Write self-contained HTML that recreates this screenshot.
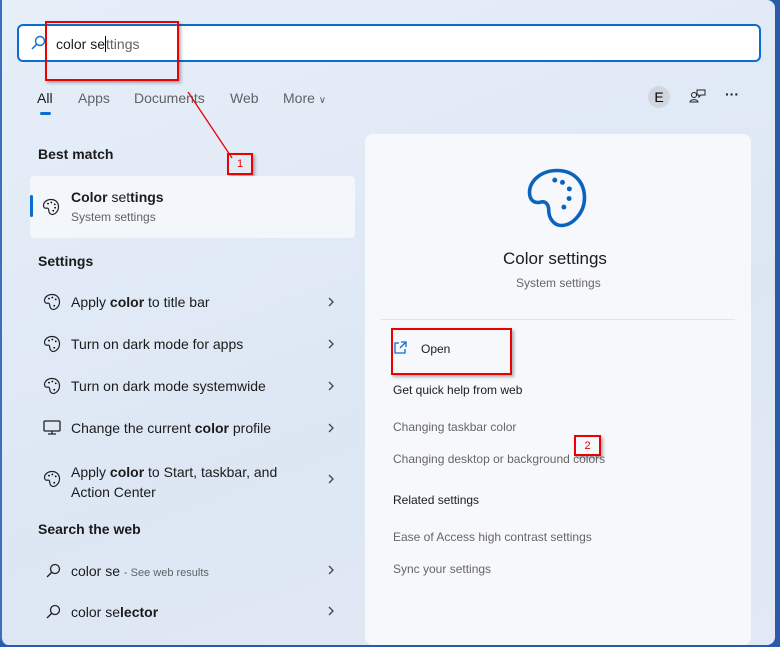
<!DOCTYPE html>
<html><head><style>
*{margin:0;padding:0;box-sizing:border-box}
body{width:780px;height:647px;overflow:hidden;background:#2a5aa8;font-family:"Liberation Sans",sans-serif;position:relative}
.win{position:absolute;left:0;top:0;width:775px;height:645px;background:linear-gradient(160deg,#e6eef8,#dde7f4 60%,#e2e8f5);border-radius:0 8px 8px 8px;border-left:2px solid #3a6fc0}
.abs{position:absolute}
.search{left:17px;top:24px;width:744px;height:38px;border:2px solid #0a6ed1;border-radius:6px;background:#fff}
.t{position:absolute;font-size:14px;color:#1b1b1b;white-space:nowrap}
.t.g,.g{color:#5f6368}
.h{font-weight:bold;font-size:14px}
.chev{position:absolute;left:327px}
.panel{left:365px;top:134px;width:386px;height:511px;background:#f7f8fc;border-radius:8px}
.red{position:absolute;border:2px solid #e00;box-shadow:2px 2px 3px rgba(0,0,0,.3)}
.pt{position:absolute;font-size:12px;color:#1b1b1b;white-space:nowrap}
.pt.g{color:#666}
</style></head><body>
<div class="win"></div>
<div class="abs search"></div>
<svg class="abs" style="left:30px;top:35px" width="16" height="16" viewBox="0 0 16 16"><circle cx="10" cy="6" r="4.5" fill="none" stroke="#0a6ed1" stroke-width="1.4"/><path d="M6.8 9.2L2 14" stroke="#0a6ed1" stroke-width="1.5"/></svg>
<div class="t" style="left:56px;top:36px">color se<span style="border-left:1px solid #000"></span><span class="g">ttings</span></div>
<div class="red" style="left:45px;top:21px;width:134px;height:60px"></div>
<div class="t" style="left:37px;top:90px">All</div>
<div class="abs" style="left:40px;top:112px;width:11px;height:3px;background:#0a6ed1;border-radius:2px"></div>
<div class="t g" style="left:78px;top:90px">Apps</div>
<div class="t g" style="left:134px;top:90px">Documents</div>
<div class="t g" style="left:230px;top:90px">Web</div>
<div class="t g" style="left:283px;top:90px">More <span style="font-size:10px">∨</span></div>
<div class="abs" style="left:648px;top:86px;width:22px;height:22px;border-radius:50%;background:#d2d6de;font-size:14px;text-align:center;line-height:22px">E</div>
<svg class="abs" style="left:689px;top:88px" width="18" height="16" viewBox="0 0 18 16"><circle cx="5" cy="7" r="2.5" fill="none" stroke="#222"/><path d="M1 14c0-3 8-3 8 0zM8 2h8v5h-4l-2 2v-2H8z" fill="none" stroke="#222"/></svg>
<div class="t" style="left:725px;top:86px;font-weight:bold">···</div>
<svg class="abs" style="left:0;top:0" width="780" height="647"><path d="M188 92L232 158M499 390L580 440" stroke="#e00" stroke-width="1.3"/></svg>
<div class="red" style="left:227px;top:153px;width:26px;height:22px;font-size:11px;color:#e00;text-align:center;line-height:18px">1</div>
<div class="t h" style="left:38px;top:146px">Best match</div>
<div class="abs" style="left:30px;top:176px;width:325px;height:62px;background:#f3f6fb;border-radius:4px"></div>
<div class="abs" style="left:30px;top:195px;width:3px;height:22px;background:#0a6ed1;border-radius:2px"></div>
<svg class="abs" style="left:42px;top:198px" width="18" height="18" viewBox="0 0 24 24"><path d="M12 2C6 2 2 6 2 10c0 3 2 4 4 3.5 2-.5 3 1 3 3 0 3 2 5.5 4.5 5.5C18 22 22 17 22 12 22 6 18 2 12 2z" fill="none" stroke="#222" stroke-width="1.6"/><circle cx="8" cy="7.5" r="1.2"/><circle cx="12.5" cy="6" r="1.2"/><circle cx="17" cy="8.5" r="1.2"/><circle cx="17.5" cy="13" r="1.2"/><circle cx="15" cy="17" r="1.2"/></svg>
<div class="t" style="left:71px;top:189px"><b>Color</b> set<b>tings</b></div>
<div class="t g" style="left:71px;top:210px;font-size:12px">System settings</div>
<div class="t h" style="left:38px;top:253px">Settings</div>
<div class="t" style="left:71px;top:294px">Apply <b>color</b> to title bar</div>
<div class="t" style="left:71px;top:336px">Turn on dark mode for apps</div>
<div class="t" style="left:71px;top:378px">Turn on dark mode systemwide</div>
<div class="t" style="left:71px;top:420px">Change the current <b>color</b> profile</div>
<div class="t" style="left:71px;top:462px;line-height:20px">Apply <b>color</b> to Start, taskbar, and<br>Action Center</div>
<svg class="chev" style="top:296px" width="8" height="12" viewBox="0 0 8 12"><path d="M2 2l4 4-4 4" fill="none" stroke="#444" stroke-width="1.3"/></svg>
<svg class="chev" style="top:338px" width="8" height="12" viewBox="0 0 8 12"><path d="M2 2l4 4-4 4" fill="none" stroke="#444" stroke-width="1.3"/></svg>
<svg class="chev" style="top:380px" width="8" height="12" viewBox="0 0 8 12"><path d="M2 2l4 4-4 4" fill="none" stroke="#444" stroke-width="1.3"/></svg>
<svg class="chev" style="top:422px" width="8" height="12" viewBox="0 0 8 12"><path d="M2 2l4 4-4 4" fill="none" stroke="#444" stroke-width="1.3"/></svg>
<svg class="chev" style="top:473px" width="8" height="12" viewBox="0 0 8 12"><path d="M2 2l4 4-4 4" fill="none" stroke="#444" stroke-width="1.3"/></svg>
<svg class="chev" style="top:564px" width="8" height="12" viewBox="0 0 8 12"><path d="M2 2l4 4-4 4" fill="none" stroke="#444" stroke-width="1.3"/></svg>
<svg class="chev" style="top:605px" width="8" height="12" viewBox="0 0 8 12"><path d="M2 2l4 4-4 4" fill="none" stroke="#444" stroke-width="1.3"/></svg>
<svg class="abs" style="left:43px;top:293px" width="18" height="18" viewBox="0 0 24 24"><path d="M12 2C6 2 2 6 2 10c0 3 2 4 4 3.5 2-.5 3 1 3 3 0 3 2 5.5 4.5 5.5C18 22 22 17 22 12 22 6 18 2 12 2z" fill="none" stroke="#222" stroke-width="1.6"/><circle cx="8" cy="7.5" r="1.2"/><circle cx="12.5" cy="6" r="1.2"/><circle cx="17" cy="8.5" r="1.2"/><circle cx="15" cy="17" r="1.2"/></svg>
<svg class="abs" style="left:43px;top:335px" width="18" height="18" viewBox="0 0 24 24"><path d="M12 2C6 2 2 6 2 10c0 3 2 4 4 3.5 2-.5 3 1 3 3 0 3 2 5.5 4.5 5.5C18 22 22 17 22 12 22 6 18 2 12 2z" fill="none" stroke="#222" stroke-width="1.6"/><circle cx="8" cy="7.5" r="1.2"/><circle cx="12.5" cy="6" r="1.2"/><circle cx="17" cy="8.5" r="1.2"/><circle cx="15" cy="17" r="1.2"/></svg>
<svg class="abs" style="left:43px;top:377px" width="18" height="18" viewBox="0 0 24 24"><path d="M12 2C6 2 2 6 2 10c0 3 2 4 4 3.5 2-.5 3 1 3 3 0 3 2 5.5 4.5 5.5C18 22 22 17 22 12 22 6 18 2 12 2z" fill="none" stroke="#222" stroke-width="1.6"/><circle cx="8" cy="7.5" r="1.2"/><circle cx="12.5" cy="6" r="1.2"/><circle cx="17" cy="8.5" r="1.2"/><circle cx="15" cy="17" r="1.2"/></svg>
<svg class="abs" style="left:43px;top:420px" width="18" height="16" viewBox="0 0 18 16"><rect x="1" y="1" width="16" height="10" rx="1" fill="none" stroke="#222" stroke-width="1.3"/><path d="M5 14h8M9 11v3" stroke="#222" stroke-width="1.3"/></svg>
<svg class="abs" style="left:43px;top:470px" width="18" height="18" viewBox="0 0 24 24"><path d="M12 2C6 2 2 6 2 10c0 3 2 4 4 3.5 2-.5 3 1 3 3 0 3 2 5.5 4.5 5.5C18 22 22 17 22 12 22 6 18 2 12 2z" fill="none" stroke="#222" stroke-width="1.6"/><circle cx="8" cy="7.5" r="1.2"/><circle cx="12.5" cy="6" r="1.2"/><circle cx="17" cy="8.5" r="1.2"/><circle cx="15" cy="17" r="1.2"/></svg>
<div class="t h" style="left:38px;top:521px">Search the web</div>
<svg class="abs" style="left:45px;top:563px" width="16" height="16" viewBox="0 0 16 16"><circle cx="10" cy="6" r="4.5" fill="none" stroke="#222" stroke-width="1.3"/><path d="M6.8 9.2L2 14" stroke="#222" stroke-width="1.4"/></svg>
<div class="t" style="left:71px;top:563px">color se <span class="g" style="font-size:11px">- See web results</span></div>
<svg class="abs" style="left:45px;top:604px" width="16" height="16" viewBox="0 0 16 16"><circle cx="10" cy="6" r="4.5" fill="none" stroke="#222" stroke-width="1.3"/><path d="M6.8 9.2L2 14" stroke="#222" stroke-width="1.4"/></svg>
<div class="t" style="left:71px;top:604px">color se<b>lector</b></div>
<div class="abs panel"></div>
<svg class="abs" style="left:524px;top:165px" width="66" height="66" viewBox="0 0 24 24"><path d="M12 2C6 2 2 6 2 10c0 3 2 4 4 3.5 2-.5 3 1 3 3 0 3 2 5.5 4.5 5.5C18 22 22 17 22 12 22 6 18 2 12 2z" fill="none" stroke="#0a64be" stroke-width="1.3"/><g fill="#0a64be"><circle cx="11.2" cy="5.5" r=".9"/><circle cx="14" cy="6.3" r=".9"/><circle cx="16.5" cy="8.7" r=".9"/><circle cx="16.4" cy="12.2" r=".9"/><circle cx="14.5" cy="15.3" r=".9"/></g></svg>
<div class="t" style="left:503px;top:249px;font-size:17px">Color settings</div>
<div class="pt g" style="left:516px;top:276px">System settings</div>
<div class="abs" style="left:381px;top:319px;width:354px;height:1px;background:#e0e3ea"></div>
<svg class="abs" style="left:393px;top:341px" width="14" height="14" viewBox="0 0 14 14"><path d="M6 2H2v10h10V8M8 1h5v5M13 1L7 7" fill="none" stroke="#0a6ed1" stroke-width="1.3"/></svg>
<div class="pt" style="left:421px;top:342px">Open</div>
<div class="red" style="left:391px;top:328px;width:121px;height:47px"></div>
<div class="pt" style="left:393px;top:383px">Get quick help from web</div>
<div class="pt g" style="left:393px;top:420px">Changing taskbar color</div>
<div class="pt g" style="left:393px;top:452px">Changing desktop or background colors</div>
<div class="red" style="left:574px;top:435px;width:27px;height:21px;font-size:11px;color:#e00;text-align:center;line-height:18px">2</div>
<div class="pt" style="left:393px;top:493px">Related settings</div>
<div class="pt g" style="left:393px;top:530px">Ease of Access high contrast settings</div>
<div class="pt g" style="left:393px;top:562px">Sync your settings</div>
</body></html>
